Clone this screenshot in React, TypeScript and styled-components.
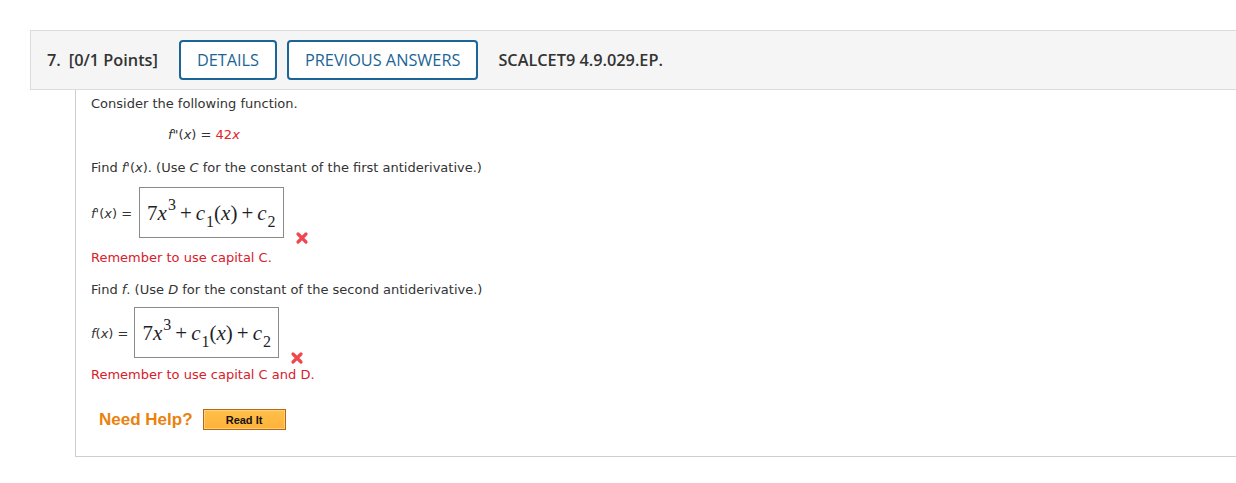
import React from "react";
import styled, { createGlobalStyle } from "styled-components";

const Global = createGlobalStyle`
  html, body { margin: 0; padding: 0; background: #fff; }
  body { overflow: hidden; }
`;

const Page = styled.div`
  padding: 30px 0 0 30px;
  width: 1236px;
  box-sizing: border-box;
`;

const Header = styled.div`
  display: flex;
  align-items: center;
  height: 58px;
  background: #f5f5f5;
  border: 1px solid #dcdcdc;
  border-right: none;
  padding-left: 16px;
  font-family: "Open Sans", sans-serif;
  font-weight: 600;
  font-size: 16.3px;
  color: #333;
  line-height: 20px;
`;

const Num = styled.span`
  margin-right: 8px;
  margin-top: -1px;
`;

const Points = styled.span`
  margin-right: 21px;
  margin-top: -1px;
`;

const TabButton = styled.div`
  box-sizing: border-box;
  height: 40px;
  display: flex;
  align-items: center;
  padding: 0 16px 1px;
  border: 2px solid #1b6496;
  border-radius: 4px;
  color: #1b6496;
  font-weight: 500;
  margin-right: 10px;
  background: #fff;
`;

const Code = styled.span`
  margin-left: 10px;
  margin-top: -1px;
`;

const Body = styled.div`
  margin-left: 45px;
  border-left: 1px solid #cfcfcf;
  border-bottom: 1px solid #cfcfcf;
  padding: 6px 0 26px 15px;
  font-family: "DejaVu Sans", Verdana, sans-serif;
  font-size: 13px;
  color: #333;
`;

const Line = styled.div<{ $mt?: number; $indent?: number }>`
  margin-top: ${(p) => p.$mt ?? 0}px;
  padding-left: ${(p) => p.$indent ?? 0}px;
  line-height: 16px;
`;

const Red = styled.span`
  color: #e32227;
`;

const Err = styled.div<{ $mt?: number }>`
  color: #d8202b;
  margin-top: ${(p) => p.$mt ?? 0}px;
  line-height: 16px;
`;

const AnswerRow = styled.div<{ $mt?: number }>`
  display: flex;
  align-items: flex-start;
  margin-top: ${(p) => p.$mt ?? 0}px;
`;

const Label = styled.span<{ $mr?: number }>`
  margin-top: 19px;
  margin-right: ${(p) => p.$mr ?? 6}px;
  white-space: nowrap;
`;

const MathBox = styled.div`
  box-sizing: border-box;
  width: 145px;
  height: 51px;
  border: 1px solid #8a8a8a;
  display: flex;
  align-items: center;
  padding: 0 0 0 7px;
`;

const MathText = styled.span`
  font-family: "Liberation Serif", "DejaVu Serif", "Times New Roman", serif;
  font-size: 21px;
  color: #1f1f2a;
  white-space: nowrap;
  line-height: 24px;
  margin-top: 3px;
`;

const MI = styled.span`
  font-style: italic;
  font-family: "Liberation Serif", serif;
`;

const I = styled.i`
  font-style: italic;
`;

const Sup = styled.span`
  font-size: 16px;
  position: relative;
  top: -10px;
  margin-left: 1px;
`;

const Sub = styled.span`
  font-size: 16px;
  position: relative;
  top: 7px;
  margin-left: 1px;
`;

const Op = styled.span`
  margin: 0 4px;
`;

const MarkWrap = styled.span<{ $mt: number; $ml: number }>`
  display: inline-flex;
  margin-top: ${(p) => p.$mt}px;
  margin-left: ${(p) => p.$ml}px;
`;

const HelpRow = styled.div`
  display: flex;
  align-items: center;
  margin-top: 26px;
  padding-left: 8px;
`;

const NeedHelp = styled.span`
  font-family: "Liberation Sans", Arial, sans-serif;
  font-weight: bold;
  font-size: 17px;
  color: #ea820e;
  margin-right: 10px;
`;

const ReadIt = styled.div`
  box-sizing: border-box;
  width: 83px;
  height: 21px;
  border: 1px solid #b8651a;
  box-shadow: inset 0 0 0 1px #ffd27a;
  background: linear-gradient(#ffc04a, #ffb23a);
  display: flex;
  align-items: center;
  justify-content: center;
  font-family: "Liberation Sans", Arial, sans-serif;
  font-weight: bold;
  font-size: 11px;
  color: #111;
`;

const XMark = () => (
  <svg width="14" height="14" viewBox="0 0 14 14">
    <path d="M3 3 L11 11 M11 3 L3 11" stroke="#f0474f" strokeWidth="3.2" strokeLinecap="round" />
  </svg>
);

const Expr = () => (
  <MathBox>
    <MathText>
      7<MI>x</MI>
      <Sup>3</Sup>
      <Op>+</Op>
      <MI>c</MI>
      <Sub>1</Sub>(<MI>x</MI>)<Op>+</Op>
      <MI>c</MI>
      <Sub>2</Sub>
    </MathText>
  </MathBox>
);

export default function App() {
  return (
    <Page>
      <Global />
      <Header>
        <Num>7.</Num>
        <Points>[0/1 Points]</Points>
        <TabButton>DETAILS</TabButton>
        <TabButton>PREVIOUS ANSWERS</TabButton>
        <Code>SCALCET9 4.9.029.EP.</Code>
      </Header>
      <Body>
        <Line>Consider the following function.</Line>
        <Line $mt={15} $indent={77}>
          <I>f"</I>(<I>x</I>) = <Red>42<I>x</I></Red>
        </Line>
        <Line $mt={17}>
          Find <I>f'</I>(<I>x</I>). (Use <I>C</I> for the constant of the first antiderivative.)
        </Line>
        <AnswerRow $mt={11}>
          <Label $mr={7}>
            <I>f'</I>(<I>x</I>) =
          </Label>
          <Expr />
          <MarkWrap $mt={44} $ml={11}>
            <XMark />
          </MarkWrap>
        </AnswerRow>
        <Err $mt={5}>Remember to use capital C.</Err>
        <Line $mt={16}>
          Find <I>f</I>. (Use <I>D</I> for the constant of the second antiderivative.)
        </Line>
        <AnswerRow $mt={9}>
          <Label>
            <I>f</I>(<I>x</I>) =
          </Label>
          <Expr />
          <MarkWrap $mt={44} $ml={11}>
            <XMark />
          </MarkWrap>
        </AnswerRow>
        <Err $mt={2}>Remember to use capital C and D.</Err>
        <HelpRow>
          <NeedHelp>Need Help?</NeedHelp>
          <ReadIt>Read It</ReadIt>
        </HelpRow>
      </Body>
    </Page>
  );
}
